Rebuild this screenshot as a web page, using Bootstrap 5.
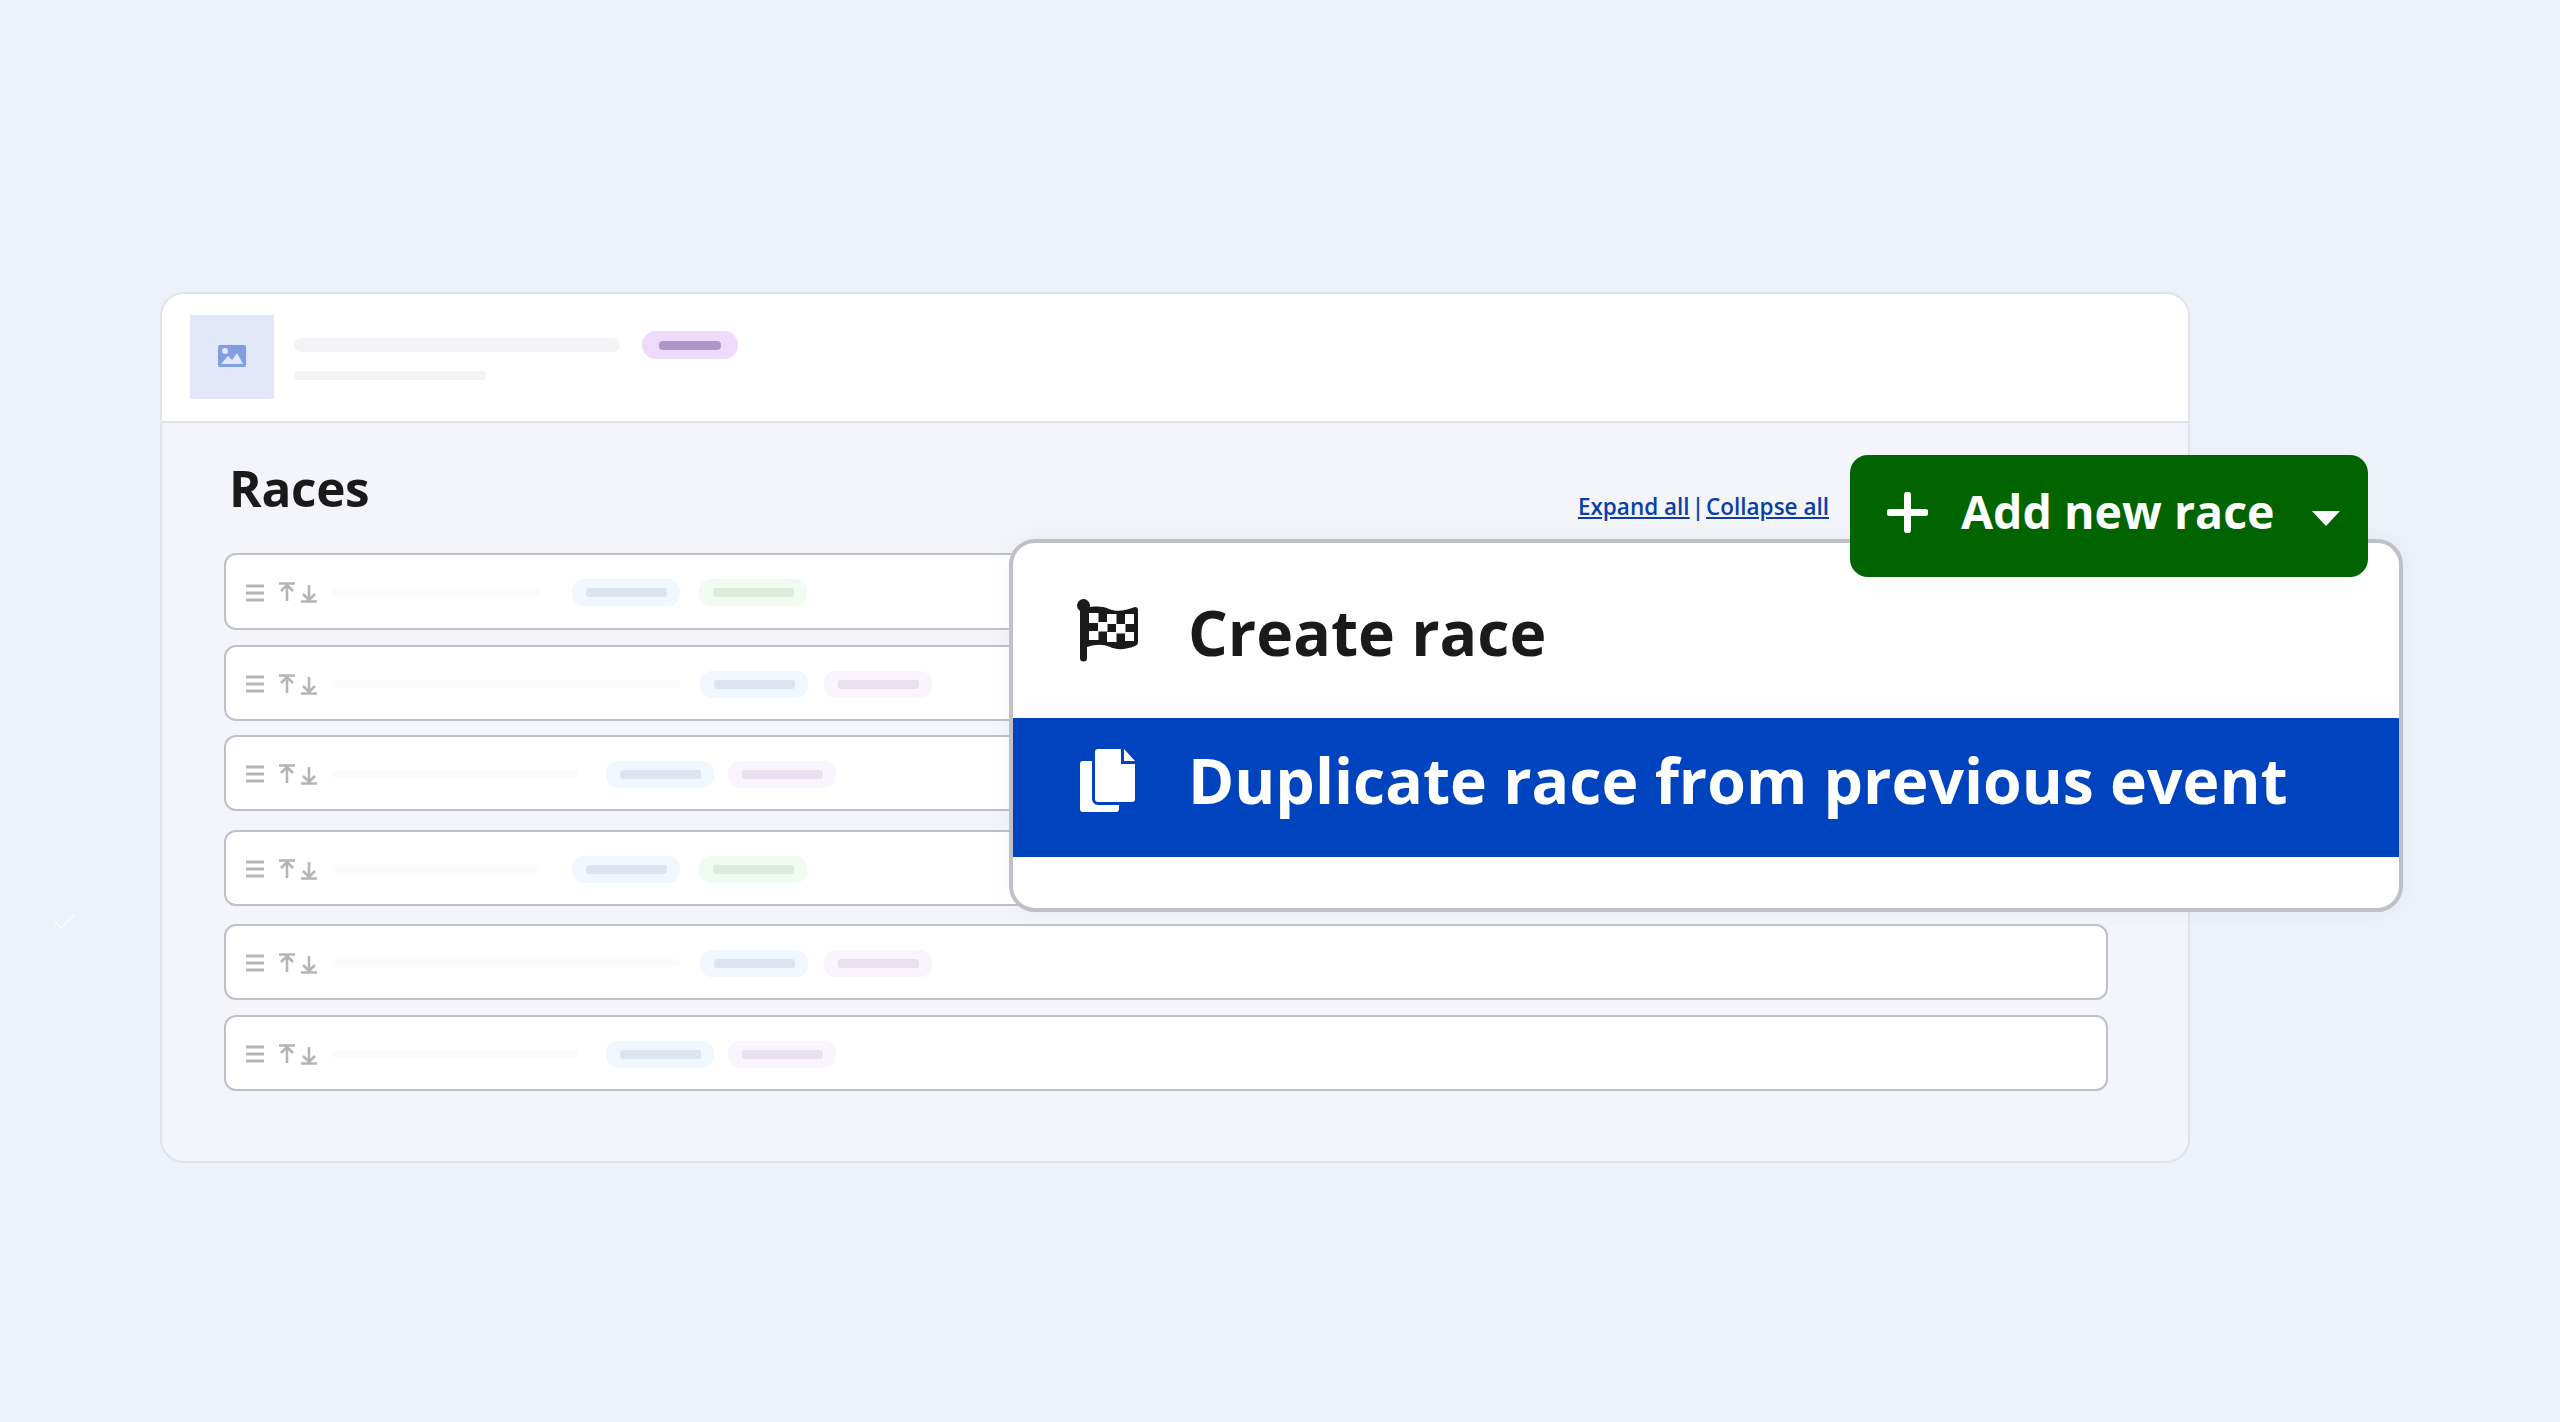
<!DOCTYPE html>
<html lang="en">
<head>
<meta charset="utf-8">
<title>Races</title>
<link href="https://cdn.jsdelivr.net/npm/bootstrap@5.3.0/dist/css/bootstrap.min.css" rel="stylesheet">
<style>
html,body{height:100%}
body{background:#edf1f9;font-family:"Open Sans","Liberation Sans",sans-serif;color:#1a1a1a}
.stage{position:relative;width:2560px;height:1422px;overflow:hidden;padding:292px 370px 0 160px}
.panel-box{height:871px;background:#f4f5fa;border:2px solid #e1e3ea;border-radius:24px;overflow:hidden}
.panel-head{height:129px;background:#fff;border-bottom:2px solid #dfe1e8;padding:21px 28px;gap:20px}
.thumb{width:84px;height:84px;background:#e1e7f6}
.thumb svg{margin-top:-3px}
.title-col{width:326px;padding-top:23px}
.title-bar{height:14px;width:326px;background:#f3f3f6;border-radius:7px}
.sub-bar{height:9px;width:192px;background:#f3f3f6;border-radius:4px;margin-top:19px}
.head-pill{width:96px;height:28px;background:#eedbfb;border-radius:14px;margin:16px 0 0 2px}
.head-pill span{display:block;width:62px;height:9px;background:#b294cd;border-radius:4px}
.panel-main{padding:0 80px 0 62px}
.races-top{height:130px}
.races-title{font-size:49.5px;font-weight:700;line-height:65px;margin:33px 0 0 5px;color:#1a1a1a;letter-spacing:-.3px}
.link-line{font-size:22.5px;font-weight:600;line-height:30px;padding-top:69px;margin-right:279px;color:#0b3fa8}
.link-line a{color:#0b3fa8}
.link-line .sep{margin:0 2px}
.race-list{gap:15px}
.race-row{height:76px;background:#fff;border:2px solid #bfc0c8;border-radius:12px;padding:2px 0 0 19px}
.race-row.first-race{height:77px}
.race-row.gap-less{margin-top:-1px}
.race-row.gap-more{margin-top:4px}
.race-row.gap-some{margin-top:3px}
.grip{width:20px;height:18px;margin-right:14px}
.arrows{width:38px;height:21px;margin-right:15px}
.slot-a{width:240px}.slot-b{width:368px}.slot-c{width:274px}
.ghost-bar{height:8px;background:#fbfbfb;border-radius:4px}
.ghost-a{width:208px}.ghost-b{width:348px}.ghost-c{width:246px}
.chip{width:108px;height:27px;border-radius:12px}
.chip span{display:block;width:81px;height:9px;border-radius:3px}
.chip-blue{background:#f1f7fe}.chip-blue span{background:#dde4ef}
.chip-green{background:#f2fbf1}.chip-green span{background:#dfeade}
.chip-purple{background:#faf5fd}.chip-purple span{background:#e9e1f0}
.chips-a{gap:19px}.chips-b{gap:16px}.chips-c{gap:14px}
.menu-over.dropdown-menu{display:block;position:absolute;left:1009px;top:539px;width:1394px;height:373px;padding:56px 0 0;margin:0;background:#fff;border:4px solid #bfc0c8;border-radius:26px;overflow:hidden;box-shadow:0 0 24px rgba(60,70,110,.05)}
.menu-over .dropdown-item{display:flex;align-items:center;font-size:62.5px;font-weight:700;padding:0;color:#1a1a1a;white-space:nowrap}
.menu-over .dropdown-item.item-first{height:119px;align-items:flex-start}
.menu-over .dropdown-item.active{height:139px;padding-bottom:15px;background:#0043be;color:#fff}
.item-icon{width:175px;flex:none;padding-left:64px;display:block}
.item-icon svg{display:block}
.item-icon .copy-glyph{margin-left:3px}
.item-first .item-text{line-height:66px;display:block}
.add-btn.btn{position:absolute;z-index:1100;left:1850px;top:455px;width:518px;height:122px;background:#006400;border:0;border-radius:18px;color:#fff;font-size:46.5px;font-weight:700;padding:0 28px 8px 37px;display:flex;align-items:center}
.add-btn svg{margin-right:33px;flex:none}
.add-btn.dropdown-toggle::after{margin-left:auto;border-top:15px solid #fff;border-left:14px solid transparent;border-right:14px solid transparent;border-bottom:0;position:relative;top:6px}
.tick-mark{position:absolute;left:53px;top:911px}
</style>
</head>
<body>
<div class="stage">
  <svg class="tick-mark" width="24" height="20" viewBox="0 0 24 20"><path d="M2 11l6 6L22 3" fill="none" stroke="#fff" stroke-width="2" opacity=".7"/></svg>

  <div class="panel-box">
    <div class="panel-head d-flex align-items-start">
      <div class="thumb d-flex align-items-center justify-content-center">
        <svg width="28" height="22" viewBox="0 0 28 22"><rect width="28" height="22" rx="2" fill="#7f9fe0"/><circle cx="7" cy="6" r="3" fill="#e1e7f6"/><path d="M3 19l7-8 4 4 5-7 6 11z" fill="#e1e7f6"/></svg>
      </div>
      <div class="title-col">
        <div class="title-bar"></div>
        <div class="sub-bar"></div>
      </div>
      <div class="head-pill d-flex align-items-center justify-content-center"><span></span></div>
    </div>

    <div class="panel-main">
      <div class="races-top d-flex justify-content-between align-items-start">
        <h2 class="races-title">Races</h2>
        <div class="link-line"><a href="#">Expand all</a><span class="sep">|</span><a href="#">Collapse all</a></div>
      </div>
      <div class="race-list d-flex flex-column">

        <div class="race-row first-race d-flex align-items-center">
          <svg class="grip" viewBox="0 0 20 18"><path d="M1 2h18M1 9h18M1 16h18" stroke="#b5b5b5" stroke-width="3.200"/></svg>
          <svg class="arrows" viewBox="0 0 38 21"><path d="M0 1.500h16M8 19V3M2 9l6-6 6 6M22 19.500h16M30 3v15M24 12l6 6 6-6" fill="none" stroke="#b5b5b5" stroke-width="2.600"/></svg>
          <div class="slot-a"><div class="ghost-bar ghost-a"></div></div>
          <div class="d-flex chips-a"><div class="chip chip-blue d-flex align-items-center justify-content-center"><span></span></div><div class="chip chip-green d-flex align-items-center justify-content-center"><span></span></div></div>
        </div>

        <div class="race-row d-flex align-items-center">
          <svg class="grip" viewBox="0 0 20 18"><path d="M1 2h18M1 9h18M1 16h18" stroke="#b5b5b5" stroke-width="3.200"/></svg>
          <svg class="arrows" viewBox="0 0 38 21"><path d="M0 1.500h16M8 19V3M2 9l6-6 6 6M22 19.500h16M30 3v15M24 12l6 6 6-6" fill="none" stroke="#b5b5b5" stroke-width="2.600"/></svg>
          <div class="slot-b"><div class="ghost-bar ghost-b"></div></div>
          <div class="d-flex chips-b"><div class="chip chip-blue d-flex align-items-center justify-content-center"><span></span></div><div class="chip chip-purple d-flex align-items-center justify-content-center"><span></span></div></div>
        </div>

        <div class="race-row gap-less d-flex align-items-center">
          <svg class="grip" viewBox="0 0 20 18"><path d="M1 2h18M1 9h18M1 16h18" stroke="#b5b5b5" stroke-width="3.200"/></svg>
          <svg class="arrows" viewBox="0 0 38 21"><path d="M0 1.500h16M8 19V3M2 9l6-6 6 6M22 19.500h16M30 3v15M24 12l6 6 6-6" fill="none" stroke="#b5b5b5" stroke-width="2.600"/></svg>
          <div class="slot-c"><div class="ghost-bar ghost-c"></div></div>
          <div class="d-flex chips-c"><div class="chip chip-blue d-flex align-items-center justify-content-center"><span></span></div><div class="chip chip-purple d-flex align-items-center justify-content-center"><span></span></div></div>
        </div>

        <div class="race-row gap-more d-flex align-items-center">
          <svg class="grip" viewBox="0 0 20 18"><path d="M1 2h18M1 9h18M1 16h18" stroke="#b5b5b5" stroke-width="3.200"/></svg>
          <svg class="arrows" viewBox="0 0 38 21"><path d="M0 1.500h16M8 19V3M2 9l6-6 6 6M22 19.500h16M30 3v15M24 12l6 6 6-6" fill="none" stroke="#b5b5b5" stroke-width="2.600"/></svg>
          <div class="slot-a"><div class="ghost-bar ghost-a"></div></div>
          <div class="d-flex chips-a"><div class="chip chip-blue d-flex align-items-center justify-content-center"><span></span></div><div class="chip chip-green d-flex align-items-center justify-content-center"><span></span></div></div>
        </div>

        <div class="race-row gap-some d-flex align-items-center">
          <svg class="grip" viewBox="0 0 20 18"><path d="M1 2h18M1 9h18M1 16h18" stroke="#b5b5b5" stroke-width="3.200"/></svg>
          <svg class="arrows" viewBox="0 0 38 21"><path d="M0 1.500h16M8 19V3M2 9l6-6 6 6M22 19.500h16M30 3v15M24 12l6 6 6-6" fill="none" stroke="#b5b5b5" stroke-width="2.600"/></svg>
          <div class="slot-b"><div class="ghost-bar ghost-b"></div></div>
          <div class="d-flex chips-b"><div class="chip chip-blue d-flex align-items-center justify-content-center"><span></span></div><div class="chip chip-purple d-flex align-items-center justify-content-center"><span></span></div></div>
        </div>

        <div class="race-row d-flex align-items-center">
          <svg class="grip" viewBox="0 0 20 18"><path d="M1 2h18M1 9h18M1 16h18" stroke="#b5b5b5" stroke-width="3.200"/></svg>
          <svg class="arrows" viewBox="0 0 38 21"><path d="M0 1.500h16M8 19V3M2 9l6-6 6 6M22 19.500h16M30 3v15M24 12l6 6 6-6" fill="none" stroke="#b5b5b5" stroke-width="2.600"/></svg>
          <div class="slot-c"><div class="ghost-bar ghost-c"></div></div>
          <div class="d-flex chips-c"><div class="chip chip-blue d-flex align-items-center justify-content-center"><span></span></div><div class="chip chip-purple d-flex align-items-center justify-content-center"><span></span></div></div>
        </div>

      </div>
    </div>
  </div>

  <ul class="dropdown-menu show menu-over list-unstyled">
    <li><a class="dropdown-item item-first" href="#">
      <span class="item-icon"><svg width="61" height="63" viewBox="0 0 61 63"><path d="M3 8h7v51a3.500 3.500 0 0 1-7 0z" fill="#1a1a1a"/><circle cx="6.500" cy="6.500" r="6.500" fill="#1a1a1a"/><path d="M8 9c10-2 17-2 24 1s16 2 26-2c2 0 3 1 3 3v32c0 2-1 3-3 4-10 4-18 4-25 1s-14-3-23 0z" fill="#1a1a1a"/><g fill="#fff"><rect x="12" y="14" width="9.500" height="10"/><rect x="30" y="15" width="9.500" height="10"/><rect x="48" y="15" width="9" height="10"/><rect x="21" y="23" width="9.500" height="9.500"/><rect x="39" y="25" width="9.500" height="9.500"/><rect x="12" y="32" width="9.500" height="9"/><rect x="30" y="33" width="9.500" height="10"/><rect x="48" y="33" width="9" height="9"/></g></svg></span>
      <span class="item-text">Create race</span></a></li>
    <li><a class="dropdown-item active" href="#">
      <span class="item-icon"><svg class="copy-glyph" width="55" height="63" viewBox="0 0 55 63"><path d="M18 0h23v15h14v35a3 3 0 0 1-3 3H18a3 3 0 0 1-3-3V3a3 3 0 0 1 3-3z" fill="#fff"/><path d="M44 0l11 12H44z" fill="#fff"/><path d="M3 12h9v38a6 6 0 0 0 6 6h21v4a3 3 0 0 1-3 3H3a3 3 0 0 1-3-3V15a3 3 0 0 1 3-3z" fill="#fff"/></svg></span>
      <span class="item-text">Duplicate race from previous event</span></a></li>
  </ul>

  <button type="button" class="btn add-btn dropdown-toggle">
    <svg width="41" height="41" viewBox="0 0 41 41"><path d="M20.500 3v35M3 20.500h35" stroke="#fff" stroke-width="7" stroke-linecap="round"/></svg>
    Add new race
  </button>
</div>
<script src="https://cdn.jsdelivr.net/npm/bootstrap@5.3.0/dist/js/bootstrap.bundle.min.js"></script>
</body>
</html>
